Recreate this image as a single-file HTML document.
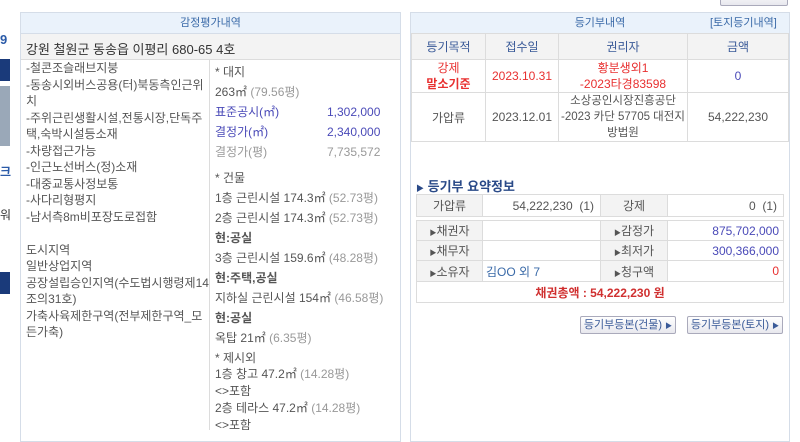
<!DOCTYPE html>
<html><head><meta charset="utf-8"><style>
*{margin:0;padding:0;box-sizing:border-box}
body{width:800px;height:429px;overflow:hidden;background:#fff;font-family:"Liberation Sans","Noto Sans CJK KR",sans-serif;font-size:12px;color:#555;position:relative}
.a{position:absolute;white-space:nowrap}
.box{position:absolute;border:1px solid #d5dde8;background:#fff}
.hd{position:absolute;background:#eaf2fb;border-bottom:1px solid #d5dde8;color:#3a6aa8;text-align:center;font-size:11px;line-height:21px}
.g{color:#999}
.bl{color:#4a4ab8}
.red{color:#e83030}
table{border-collapse:collapse;position:absolute;font-size:12px;table-layout:fixed}
td{border:1px solid #dcdcdc;text-align:center;color:#555;white-space:nowrap;overflow:hidden;padding:0}
.btn{position:absolute;border:1px solid #aab;border-radius:2px;background:linear-gradient(#fff,#e8e8ee);color:#3a5a98;font-size:11px;text-align:center;line-height:16px;white-space:nowrap}
</style></head><body>
<div class="a" style="left:0;top:32px;color:#2a5aa8;font-weight:bold;font-size:13px">9</div>
<div class="a" style="left:0;top:59px;width:10px;height:22px;background:#1a3a7a"></div>
<div class="a" style="left:0;top:86px;width:10px;height:60px;background:#9aa8b8"></div>
<div class="a" style="left:0;top:163px;color:#2a5aa8;font-weight:bold;font-size:12px">크</div>
<div class="a" style="left:0;top:206px;color:#333;font-size:12px">워</div>
<div class="a" style="left:0;top:272px;width:10px;height:22px;background:#1a3a7a"></div>

<div class="box" style="left:20px;top:12px;width:381px;height:430px"></div>
<div class="hd" style="left:21px;top:13px;width:379px;height:21px">감정평가내역</div>
<div class="a" style="left:21px;top:34px;width:379px;height:26px;background:#f3f3f3;border-bottom:1px solid #dcdcdc"></div>
<div class="a" style="left:26px;top:39px;font-size:13px;color:#333">강원 철원군 동송읍 이평리 680-65 4호</div>
<div class="a" style="left:209px;top:60px;width:1px;height:370px;background:#dcdcdc"></div>
<div class="a" style="left:26px;top:60px;line-height:16.5px;color:#555">-철콘조슬래브지붕<br>-동송시외버스공용(터)북동측인근위<br>치<br>-주위근린생활시설,전통시장,단독주<br>택,숙박시설등소재<br>-차량접근가능<br>-인근노선버스(정)소재<br>-대중교통사정보통<br>-사다리형평지<br>-남서측8m비포장도로접함<br><br>도시지역<br>일반상업지역<br>공장설립승인지역(수도법시행령제14<br>조의31호)<br>가축사육제한구역(전부제한구역_모<br>든가축)</div>
<div class="a" style="left:215px;top:62px;line-height:20px">* 대지<br>263㎡ <span class="g">(79.56평)</span><br><span class="bl">표준공시(㎡)</span><br><span class="bl">결정가(㎡)</span><br><span class="g">결정가(평)</span></div>
<div class="a bl" style="left:327px;top:102px;line-height:20px;text-align:right;width:48px">1,302,000<br>2,340,000<br><span class="g">7,735,572</span></div>
<div class="a" style="left:215px;top:168px;line-height:20px">* 건물<br>1층 근린시설 174.3㎡ <span class="g">(52.73평)</span><br>2층 근린시설 174.3㎡ <span class="g">(52.73평)</span><br><b>현:공실</b><br>3층 근린시설 159.6㎡ <span class="g">(48.28평)</span><br><b>현:주택,공실</b><br>지하실 근린시설 154㎡ <span class="g">(46.58평)</span><br><b>현:공실</b><br>옥탑 21㎡ <span class="g">(6.35평)</span><br>* 제시외</div>
<div class="a" style="left:215px;top:366px;line-height:17px">1층 창고 47.2㎡ <span class="g">(14.28평)</span><br>&lt;&gt;포함<br>2층 테라스 47.2㎡ <span class="g">(14.28평)</span><br>&lt;&gt;포함</div>

<div class="btn" style="left:720px;top:-10px;width:68px;height:16px"></div>
<div class="box" style="left:410px;top:12px;width:380px;height:430px"></div>
<div class="hd" style="left:411px;top:13px;width:378px;height:21px">등기부내역</div>
<div class="a" style="left:710px;top:13px;color:#3a6aa8;font-size:11px;line-height:21px">[토지등기내역]</div>
<table style="left:411px;top:33px;width:378px">
<tr style="height:26px;background:#f3f3f3"><td style="width:74px;color:#3a5a98">등기목적</td><td style="width:73px;color:#3a5a98">접수일</td><td style="width:129px;color:#3a5a98">권리자</td><td style="color:#3a5a98">금액</td></tr>
<tr style="height:33px"><td class="red" style="line-height:16px">강제<br><b>말소기준</b></td><td class="red">2023.10.31</td><td class="red" style="line-height:16px">황분생외1<br>-2023타경83598</td><td class="bl">0</td></tr>
<tr style="height:49px"><td>가압류</td><td>2023.12.01</td><td style="line-height:16px;font-size:11.5px">소상공인시장진흥공단<br>-2023 카단 57705 대전지<br>방법원</td><td>54,222,230</td></tr>
</table>
<div class="a" style="left:416px;top:176px;font-size:13px;color:#2a4a88;font-weight:bold"><span style="font-size:8px">▶</span> 등기부 요약정보</div>
<table style="left:416px;top:194px;width:368px">
<tr style="height:22px"><td style="width:66px;background:#f3f3f3">가압류</td><td style="width:118px;text-align:right;padding-right:6px">54,222,230 &nbsp;(1)</td><td style="width:67px;background:#f3f3f3">강제</td><td style="text-align:right;padding-right:6px">0 &nbsp;(1)</td></tr>
</table>
<table style="left:416px;top:220px;width:368px">
<tr style="height:20px"><td style="width:66px;background:#f3f3f3"><span style="font-size:7px">▶</span>채권자</td><td style="width:118px"></td><td style="width:67px;background:#f3f3f3"><span style="font-size:7px">▶</span>감정가</td><td class="bl" style="text-align:right;padding-right:4px">875,702,000</td></tr>
<tr style="height:20px"><td style="background:#f3f3f3"><span style="font-size:7px">▶</span>채무자</td><td></td><td style="background:#f3f3f3"><span style="font-size:7px">▶</span>최저가</td><td class="bl" style="text-align:right;padding-right:4px">300,366,000</td></tr>
<tr style="height:21px"><td style="background:#f3f3f3"><span style="font-size:7px">▶</span>소유자</td><td style="text-align:left;padding-left:3px;color:#3a6aa8">김OO 외 7</td><td style="background:#f3f3f3"><span style="font-size:7px">▶</span>청구액</td><td class="red" style="text-align:right;padding-right:4px">0</td></tr>
<tr style="height:21px"><td colspan="4" style="color:#d03030;font-weight:bold">채권총액 : 54,222,230 원</td></tr>
</table>
<div class="btn" style="left:580px;top:316px;width:96px;height:18px">등기부등본(건물) <span style="font-size:7px">▶</span></div>
<div class="btn" style="left:687px;top:316px;width:96px;height:18px">등기부등본(토지) <span style="font-size:7px">▶</span></div>
</body></html>
